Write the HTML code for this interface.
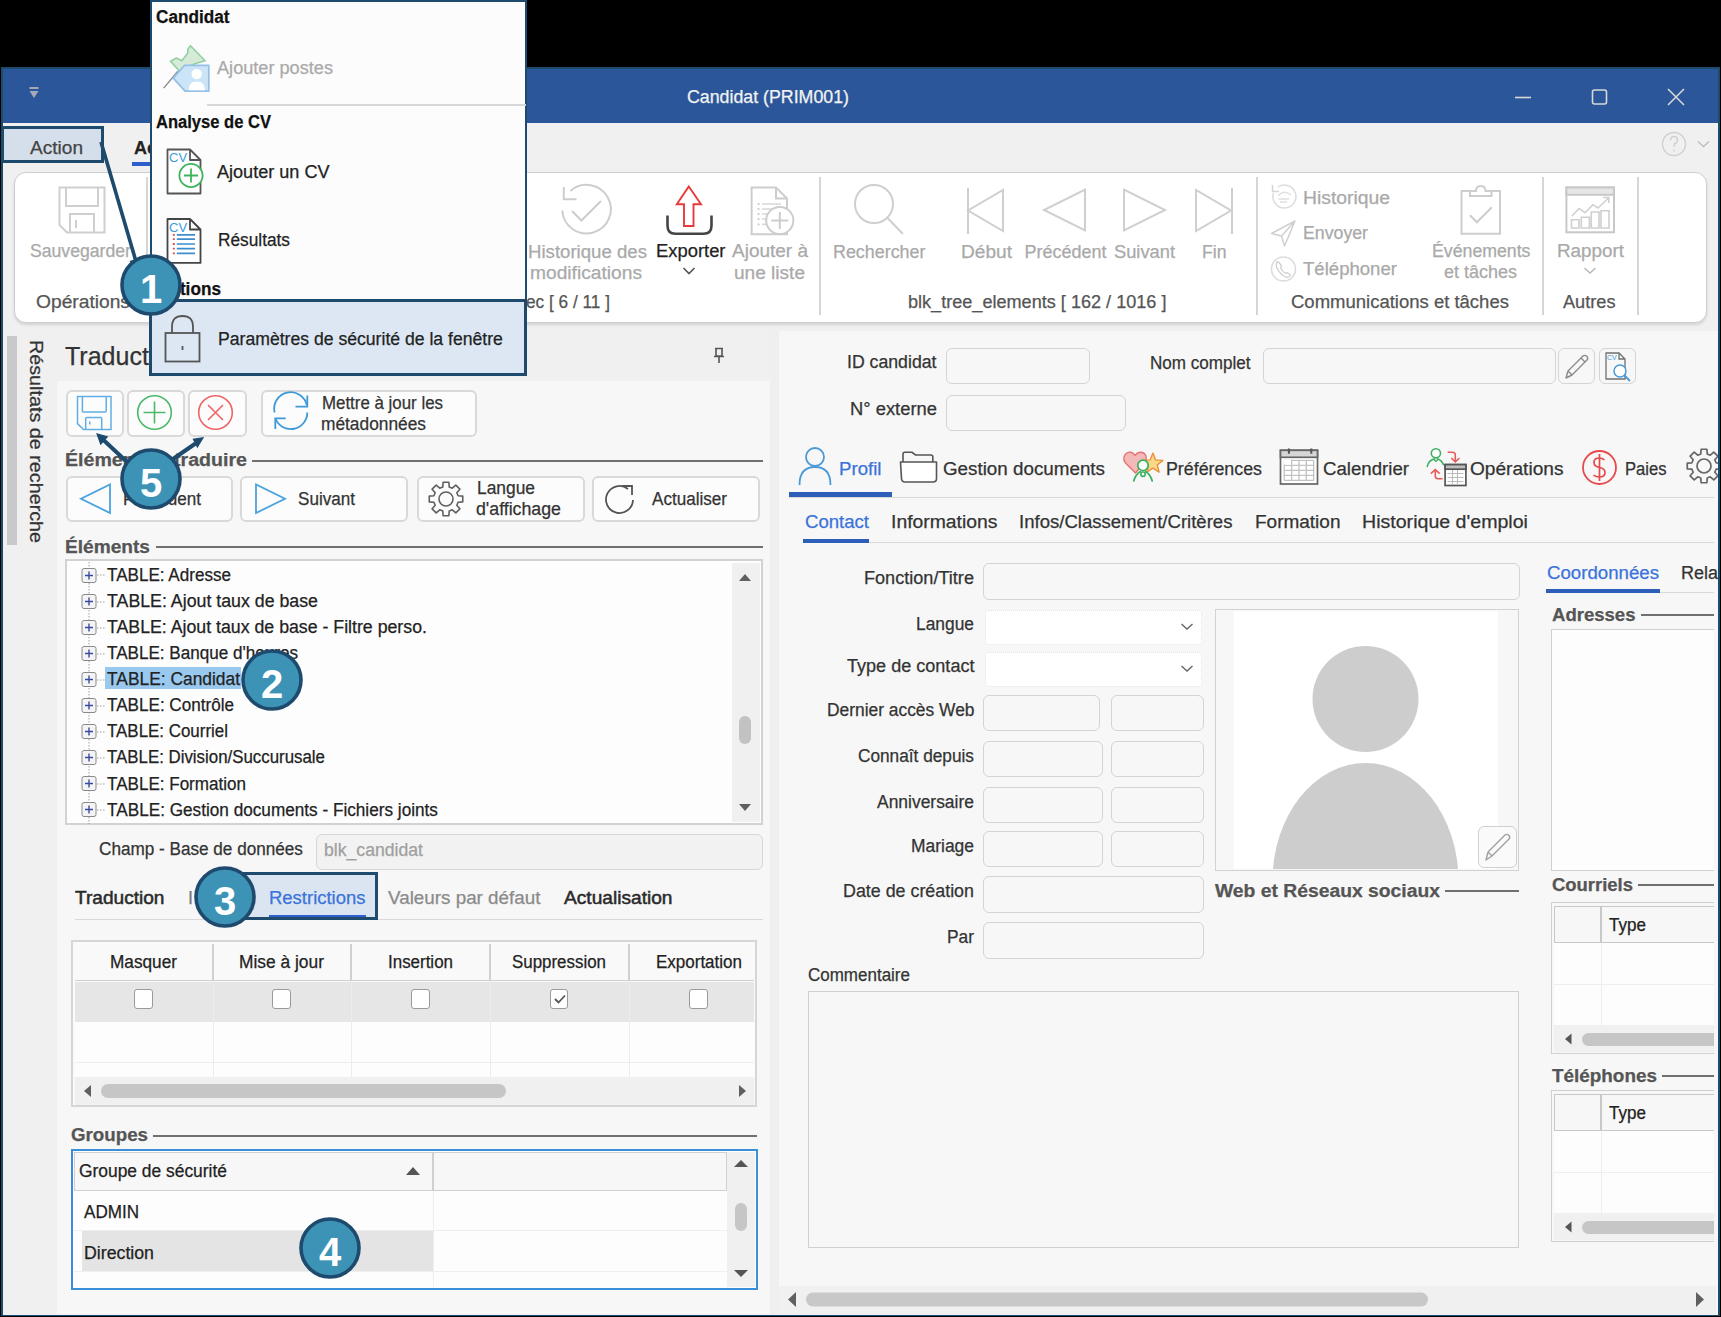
<!DOCTYPE html>
<html><head><meta charset="utf-8"><style>
html,body{margin:0;padding:0;}
body{width:1721px;height:1317px;background:#000;position:relative;overflow:hidden;font-family:"Liberation Sans",sans-serif;}
.t{position:absolute;white-space:nowrap;transform-origin:0 50%;-webkit-text-stroke:0.25px currentColor;}
.r{position:absolute;box-sizing:border-box;}
svg.r{overflow:visible;}
</style></head><body>
<div class="r" style="left:1px;top:67px;width:1720px;height:1250px;background:#f0f0f0;border:2px solid #1e4a6c;"></div>
<div class="r" style="left:3px;top:69px;width:1715px;height:54px;background:#2b579a;"></div>
<div class="t" style="left:687.0px;top:88.2px;font-size:18px;line-height:18px;color:#f2f2f2;transform:scaleX(0.9871);">Candidat (PRIM001)</div>
<svg class="r" style="left:29px;top:87px;" width="10" height="13" viewBox="0 0 10 13"><rect x="0.5" y="0" width="9" height="2" fill="#a8a8b8"/><path d="M0.5 4 L9.5 4 L5 11 Z" fill="#a8a8b8"/></svg>
<svg class="r" style="left:1510px;top:85px;" width="200" height="25" viewBox="0 0 200 25"><path d="M5 12.5 H21" stroke="#d8d8d8" stroke-width="1.6"/><rect x="82.5" y="5" width="14" height="14" rx="2" fill="none" stroke="#d8d8d8" stroke-width="1.6"/><path d="M158 4 L174 20 M174 4 L158 20" stroke="#d8d8d8" stroke-width="1.6"/></svg>
<svg class="r" style="left:1660px;top:130px;" width="54" height="30" viewBox="0 0 54 30"><circle cx="14" cy="14" r="11.5" fill="none" stroke="#cfcfcf" stroke-width="1.4"/><path d="M10.5 10.5 Q10.5 6.5 14 6.5 Q17.5 6.5 17.5 10 Q17.5 12.5 14.5 14 L14 17" fill="none" stroke="#cfcfcf" stroke-width="1.4"/><circle cx="14" cy="20.5" r="0.9" fill="#cfcfcf"/><path d="M38 11.5 L43.5 16.5 L49 11.5" fill="none" stroke="#bdbdbd" stroke-width="1.4"/></svg>
<div class="t" style="left:30.0px;top:139.2px;font-size:18px;line-height:18px;color:#444;transform:scaleX(1.0593);">Action</div>
<div class="t" style="left:134.0px;top:139.2px;font-size:18px;line-height:18px;color:#222;font-weight:bold;">Ac</div>
<div class="r" style="left:132px;top:162px;width:18px;height:4px;background:#2c5fcc;"></div>
<div class="r" style="left:14px;top:172px;width:1693px;height:151px;background:#fff;border:1.5px solid #cfcfcf;border-radius:12px;box-shadow:0 2px 3px rgba(0,0,0,0.12);"></div>
<div class="r" style="left:146px;top:177px;width:1.5px;height:138px;background:#d6d6d6;"></div>
<div class="r" style="left:819px;top:177px;width:1.5px;height:138px;background:#d6d6d6;"></div>
<div class="r" style="left:1256px;top:177px;width:1.5px;height:138px;background:#d6d6d6;"></div>
<div class="r" style="left:1542px;top:177px;width:1.5px;height:138px;background:#d6d6d6;"></div>
<div class="r" style="left:1637px;top:177px;width:1.5px;height:138px;background:#d6d6d6;"></div>
<svg class="r" style="left:58px;top:186px;" width="48" height="48" viewBox="0 0 48 48"><path d="M1.5 1.5 H46.5 V46.5 H9 L1.5 39 Z" fill="none" stroke="#cfcfcf" stroke-width="2"/><path d="M8 1.5 V20 H40 V1.5" fill="none" stroke="#cfcfcf" stroke-width="2"/><path d="M12 46.5 V28 H36 V46.5" fill="none" stroke="#cfcfcf" stroke-width="2"/><path d="M18 34 V42" stroke="#cfcfcf" stroke-width="2"/></svg>
<div class="t" style="left:30.0px;top:242.2px;font-size:18px;line-height:18px;color:#a9a9a9;transform:scaleX(0.9795);">Sauvegarder</div>
<div class="t" style="left:36.0px;top:293.2px;font-size:18px;line-height:18px;color:#555;transform:scaleX(1.0672);">Opérations</div>
<svg class="r" style="left:560px;top:185px;" width="52" height="52" viewBox="0 0 52 52"><path d="M2.3 25.5 A24.3 24.3 0 1 0 10.4 6" fill="none" stroke="#cdcdcd" stroke-width="2"/><path d="M3.8 2 V14.3 H16.5" fill="none" stroke="#cdcdcd" stroke-width="2"/><path d="M12 26 L21.4 35.5 L41 16" fill="none" stroke="#cdcdcd" stroke-width="2"/></svg>
<div class="t" style="left:528.0px;top:242.7px;font-size:18px;line-height:18px;color:#a9a9a9;transform:scaleX(1.0339);">Historique des</div>
<div class="t" style="left:530.0px;top:264.2px;font-size:18px;line-height:18px;color:#a9a9a9;transform:scaleX(1.0659);">modifications</div>
<div class="t" style="left:526.0px;top:293.2px;font-size:18px;line-height:18px;color:#555;transform:scaleX(0.9574);">ec [ 6 / 11 ]</div>
<svg class="r" style="left:664px;top:184px;" width="50" height="52" viewBox="0 0 50 52"><path d="M24.8 2.5 L37 20.3 H29.5 V42 H20 V20.3 H12.8 Z" fill="none" stroke="#e83a3a" stroke-width="1.9" stroke-linejoin="miter"/><path d="M3.5 31.5 V41.5 Q3.5 49.8 11.5 49.8 H39.5 Q47.5 49.8 47.5 41.5 V31.5" fill="none" stroke="#444" stroke-width="2.6"/></svg>
<div class="t" style="left:655.5px;top:242.2px;font-size:18px;line-height:18px;color:#222;transform:scaleX(1.0214);">Exporter</div>
<svg class="r" style="left:682px;top:266px;" width="14" height="10" viewBox="0 0 14 10"><path d="M1.5 2 L7 7.5 L12.5 2" fill="none" stroke="#555" stroke-width="1.6"/></svg>
<svg class="r" style="left:749px;top:185px;" width="50" height="52" viewBox="0 0 50 52"><path d="M2.6 2.5 H27 L38 13.5 V49.3 H2.6 Z" fill="none" stroke="#cdcdcd" stroke-width="2"/><path d="M27 2.5 V13.5 H38" fill="none" stroke="#cdcdcd" stroke-width="2"/><path d="M8.5 19 H10.5 M8.5 24 H10.5 M8.5 29 H10.5 M8.5 34 H10.5 M8.5 39.4 H10.5" stroke="#d0d0d0" stroke-width="2"/><path d="M13 19 H32 M13 24 H28 M13 29 H22 M13 34 H20 M13 39.4 H20" stroke="#d8d8d8" stroke-width="1.6"/><circle cx="30.8" cy="35.5" r="13.6" fill="#fff" stroke="#cdcdcd" stroke-width="2"/><path d="M30.8 27 V44 M22.3 35.5 H39.3" stroke="#cdcdcd" stroke-width="2"/></svg>
<div class="t" style="left:732.0px;top:242.2px;font-size:18px;line-height:18px;color:#a9a9a9;transform:scaleX(1.0546);">Ajouter à</div>
<div class="t" style="left:734.0px;top:264.2px;font-size:18px;line-height:18px;color:#a9a9a9;transform:scaleX(1.0587);">une liste</div>
<svg class="r" style="left:850px;top:182px;" width="56" height="56" viewBox="0 0 56 56"><circle cx="24" cy="22" r="19" fill="none" stroke="#cfcfcf" stroke-width="2"/><path d="M37.5 36 L53 52" stroke="#cfcfcf" stroke-width="2"/></svg>
<div class="t" style="left:833.0px;top:242.6px;font-size:18px;line-height:18px;color:#a9a9a9;transform:scaleX(0.9938);">Rechercher</div>
<svg class="r" style="left:965px;top:186px;" width="42" height="50" viewBox="0 0 42 50"><path d="M3 2 V48" stroke="#cfcfcf" stroke-width="2"/><path d="M38 4 V45 L3 24.5 Z" fill="none" stroke="#cfcfcf" stroke-width="2"/></svg>
<div class="t" style="left:960.5px;top:242.6px;font-size:18px;line-height:18px;color:#a9a9a9;transform:scaleX(1.0615);">Début</div>
<svg class="r" style="left:1041px;top:187px;" width="48" height="46" viewBox="0 0 48 46"><path d="M44 2.5 V43.5 L3 23 Z" fill="none" stroke="#cfcfcf" stroke-width="2"/></svg>
<div class="t" style="left:1024.5px;top:242.6px;font-size:18px;line-height:18px;color:#a9a9a9;">Précédent</div>
<svg class="r" style="left:1121px;top:187px;" width="48" height="46" viewBox="0 0 48 46"><path d="M3 2.5 V43.5 L44 23 Z" fill="none" stroke="#cfcfcf" stroke-width="2"/></svg>
<div class="t" style="left:1114.0px;top:242.6px;font-size:18px;line-height:18px;color:#a9a9a9;transform:scaleX(1.0159);">Suivant</div>
<svg class="r" style="left:1193px;top:186px;" width="42" height="50" viewBox="0 0 42 50"><path d="M39 2 V48" stroke="#cfcfcf" stroke-width="2"/><path d="M3 4 V45 L38 24.5 Z" fill="none" stroke="#cfcfcf" stroke-width="2"/></svg>
<div class="t" style="left:1202.0px;top:242.6px;font-size:18px;line-height:18px;color:#a9a9a9;transform:scaleX(0.9794);">Fin</div>
<div class="t" style="left:908.0px;top:293.2px;font-size:18px;line-height:18px;color:#555;transform:scaleX(1.0049);">blk_tree_elements [ 162 / 1016 ]</div>
<svg class="r" style="left:1270px;top:182px;" width="30" height="30" viewBox="0 0 30 30"><path d="M3.5 11 A11.5 11.5 0 1 0 8 5" fill="none" stroke="#dcdcdc" stroke-width="1.5"/><path d="M2.5 3 V9.5 H9" fill="none" stroke="#d4d4d4" stroke-width="1.5"/><path d="M8 14 Q14 7 21 13 M8.5 17 H19 M10 20 H17" fill="none" stroke="#e0e0e0" stroke-width="1.3"/></svg>
<div class="t" style="left:1303.0px;top:188.5px;font-size:18px;line-height:18px;color:#a9a9a9;transform:scaleX(1.0732);">Historique</div>
<svg class="r" style="left:1270px;top:219px;" width="30" height="30" viewBox="0 0 30 30"><path d="M1.5 14.5 L25 2 L14.5 27 L11.5 17 Z M11.5 17 L25 2" fill="none" stroke="#d0d0d0" stroke-width="1.5" stroke-linejoin="round"/></svg>
<div class="t" style="left:1303.0px;top:224.2px;font-size:18px;line-height:18px;color:#a9a9a9;transform:scaleX(0.9841);">Envoyer</div>
<svg class="r" style="left:1270px;top:255px;" width="30" height="30" viewBox="0 0 30 30"><circle cx="13.5" cy="14" r="12" fill="none" stroke="#dcdcdc" stroke-width="1.6"/><path d="M7 7 Q5.5 9 6.5 12 Q9 18 14.5 21.5 Q17 23 19.5 21.5 L20.5 20 L17 17.5 L15.5 18.5 Q12 16.5 10.5 12.5 L11.5 11 L9 7.5 Z" fill="none" stroke="#d0d0d0" stroke-width="1.3" stroke-linejoin="round"/></svg>
<div class="t" style="left:1303.0px;top:260.2px;font-size:18px;line-height:18px;color:#a9a9a9;transform:scaleX(1.0317);">Téléphoner</div>
<svg class="r" style="left:1458px;top:183px;" width="46" height="54" viewBox="0 0 46 54"><path d="M12 8 H3.5 V50.8 H42 V8 H31" fill="none" stroke="#cdcdcd" stroke-width="2"/><path d="M12 8 V13 H33.5 V8 H27.5 Q27.5 3 22.7 3 Q18 3 18 8 Z" fill="#fff" stroke="#cdcdcd" stroke-width="2"/><path d="M11.9 32.3 L18.9 39.3 L33.8 24.2" fill="none" stroke="#cdcdcd" stroke-width="2"/></svg>
<div class="t" style="left:1432.0px;top:242.4px;font-size:18px;line-height:18px;color:#a9a9a9;transform:scaleX(0.9842);">Événements</div>
<div class="t" style="left:1444.0px;top:262.9px;font-size:18px;line-height:18px;color:#a9a9a9;">et tâches</div>
<div class="t" style="left:1290.5px;top:292.5px;font-size:18px;line-height:18px;color:#555;transform:scaleX(1.0275);">Communications et tâches</div>
<svg class="r" style="left:1564px;top:186px;" width="52" height="50" viewBox="0 0 52 50"><rect x="2.4" y="1.5" width="47.6" height="44.8" fill="none" stroke="#c8c8c8" stroke-width="2"/><rect x="2.4" y="1.5" width="47.6" height="7.3" fill="#e6e6e6" stroke="#c8c8c8" stroke-width="2"/><path d="M7.5 42 V33.7 H15 V42 Z M17.3 42 V31.2 H25.4 V42 Z M27.3 42 V26 H35 V42 Z M37 42 V24.8 H45 V42 Z" fill="none" stroke="#cfcfcf" stroke-width="1.6"/><path d="M8 30 L15 22.5 L21 26.7 L29 18.7 L34 22 L44.5 12 M39 11.5 H44.8 V17" fill="none" stroke="#d0d0d0" stroke-width="1.6"/></svg>
<div class="t" style="left:1556.5px;top:242.4px;font-size:18px;line-height:18px;color:#a9a9a9;transform:scaleX(1.0459);">Rapport</div>
<svg class="r" style="left:1583px;top:266px;" width="14" height="10" viewBox="0 0 14 10"><path d="M1.5 2 L7 7 L12.5 2" fill="none" stroke="#b8b8b8" stroke-width="1.4"/></svg>
<div class="t" style="left:1563.0px;top:292.5px;font-size:18px;line-height:18px;color:#555;transform:scaleX(1.0090);">Autres</div>
<div class="r" style="left:7px;top:336px;width:10px;height:209px;background:#c9c9c9;"></div>
<div class="t" style="left:36px;top:340px;font-size:18px;line-height:18px;color:#333;transform-origin:0 0;transform:translate(9px,0) rotate(90deg) scaleX(1.097);">Résultats de recherche</div>
<div class="t" style="left:65.0px;top:343.8px;font-size:25px;line-height:25px;color:#333;">Traduction</div>
<svg class="r" style="left:712px;top:347px;" width="14" height="17" viewBox="0 0 14 17"><path d="M3 1.5 H11 M4 1.5 V9 H10 V1.5 M2 9.5 H12 M7 9.5 V16" fill="none" stroke="#555" stroke-width="1.6"/></svg>
<div class="r" style="left:57px;top:381px;width:713px;height:933px;background:#f7f7f7;"></div>
<div class="r" style="left:770px;top:327px;width:9px;height:987px;background:#efefef;"></div>
<div class="r" style="left:66px;top:390px;width:58px;height:47px;background:#fcfcfc;border:2px solid #d9d9d9;border-radius:6px;"></div>
<div class="r" style="left:127px;top:390px;width:58px;height:47px;background:#fcfcfc;border:2px solid #d9d9d9;border-radius:6px;"></div>
<div class="r" style="left:188px;top:390px;width:59px;height:47px;background:#fcfcfc;border:2px solid #d9d9d9;border-radius:6px;"></div>
<div class="r" style="left:261px;top:390px;width:216px;height:47px;background:#fcfcfc;border:2px solid #d9d9d9;border-radius:6px;"></div>
<svg class="r" style="left:76px;top:394px;" width="38" height="38" viewBox="0 0 38 38"><path d="M1.5 2.5 H35 V35.6 H7.5 L1.5 29.6 Z" fill="none" stroke="#62aee2" stroke-width="1.5"/><path d="M6.4 2.5 V17 Q6.4 18 7.4 18 H29.2 Q30.2 18 30.2 17 V2.5" fill="none" stroke="#62aee2" stroke-width="1.5"/><path d="M9.7 35.6 V24.5 Q9.7 23.5 10.7 23.5 H24.7 Q25.7 23.5 25.7 24.5 V35.6" fill="none" stroke="#62aee2" stroke-width="1.5"/><rect x="13" y="27.5" width="1.5" height="3" fill="#62aee2"/></svg>
<svg class="r" style="left:136px;top:394px;" width="38" height="38" viewBox="0 0 38 38"><circle cx="18.5" cy="18.5" r="16.8" fill="none" stroke="#4cb96a" stroke-width="1.6"/><path d="M18.5 7.5 V29.5 M7.5 18.5 H29.5" stroke="#4cb96a" stroke-width="1.6"/></svg>
<svg class="r" style="left:197px;top:394px;" width="38" height="38" viewBox="0 0 38 38"><circle cx="18.5" cy="18.5" r="16.8" fill="none" stroke="#ef6464" stroke-width="1.6"/><path d="M11 11 L26 26 M26 11 L11 26" stroke="#ef6464" stroke-width="1.6"/></svg>
<svg class="r" style="left:272px;top:393px;" width="40" height="40" viewBox="0 0 40 40"><path d="M2.6 19.5 A16.5 16.5 0 0 1 34.8 12" fill="none" stroke="#3d9ad8" stroke-width="1.8"/><path d="M35.3 2.5 V13.6 H23.5" fill="none" stroke="#3d9ad8" stroke-width="1.8"/><path d="M35.3 19.5 A16.5 16.5 0 0 1 3.6 26" fill="none" stroke="#3d9ad8" stroke-width="1.8"/><path d="M3.3 36 V25.3 H13.7" fill="none" stroke="#3d9ad8" stroke-width="1.8"/></svg>
<div class="t" style="left:322.0px;top:394.2px;font-size:18px;line-height:18px;color:#333;transform:scaleX(0.9373);">Mettre à jour les</div>
<div class="t" style="left:321.0px;top:414.7px;font-size:18px;line-height:18px;color:#333;transform:scaleX(0.9622);">métadonnées</div>
<div class="t" style="left:65.0px;top:450.7px;font-size:18px;line-height:18px;color:#555;font-weight:bold;transform:scaleX(1.0892);">Éléments à traduire</div>
<div class="r" style="left:252px;top:459.5px;width:511px;height:2.0px;background:#707070;"></div>
<div class="r" style="left:66px;top:476px;width:167px;height:46px;background:#fcfcfc;border:2px solid #d9d9d9;border-radius:6px;"></div>
<div class="r" style="left:240px;top:476px;width:168px;height:46px;background:#fcfcfc;border:2px solid #d9d9d9;border-radius:6px;"></div>
<div class="r" style="left:417px;top:476px;width:168px;height:46px;background:#fcfcfc;border:2px solid #d9d9d9;border-radius:6px;"></div>
<div class="r" style="left:592px;top:476px;width:168px;height:46px;background:#fcfcfc;border:2px solid #d9d9d9;border-radius:6px;"></div>
<svg class="r" style="left:78px;top:482px;" width="36" height="34" viewBox="0 0 36 34"><path d="M32 2.5 V31 L3 16.75 Z" fill="none" stroke="#4ba3de" stroke-width="1.8"/></svg>
<div class="t" style="left:123.0px;top:490.2px;font-size:18px;line-height:18px;color:#333;transform:scaleX(0.9503);">Précédent</div>
<svg class="r" style="left:253px;top:482px;" width="36" height="34" viewBox="0 0 36 34"><path d="M3 2.5 V31 L32 16.75 Z" fill="none" stroke="#4ba3de" stroke-width="1.8"/></svg>
<div class="t" style="left:298.0px;top:490.2px;font-size:18px;line-height:18px;color:#333;transform:scaleX(0.9493);">Suivant</div>
<svg class="r" style="left:428px;top:481px;" width="36" height="36" viewBox="0 0 36 36"><path d="M30.08 14.79 L34.75 15.12 L34.75 20.88 L30.08 21.21 L28.81 24.27 L31.88 27.81 L27.81 31.88 L24.27 28.81 L21.21 30.08 L20.88 34.75 L15.12 34.75 L14.79 30.08 L11.73 28.81 L8.19 31.88 L4.12 27.81 L7.19 24.27 L5.92 21.21 L1.25 20.88 L1.25 15.12 L5.92 14.79 L7.19 11.73 L4.12 8.19 L8.19 4.12 L11.73 7.19 L14.79 5.92 L15.12 1.25 L20.88 1.25 L21.21 5.92 L24.27 7.19 L27.81 4.12 L31.88 8.19 L28.81 11.73 Z" fill="none" stroke="#606060" stroke-width="1.6" stroke-linejoin="round"/><circle cx="18" cy="18" r="7" fill="none" stroke="#606060" stroke-width="1.6"/></svg>
<div class="t" style="left:477.0px;top:479.2px;font-size:18px;line-height:18px;color:#333;transform:scaleX(0.9652);">Langue</div>
<div class="t" style="left:476.0px;top:499.7px;font-size:18px;line-height:18px;color:#333;transform:scaleX(0.9860);">d'affichage</div>
<svg class="r" style="left:602px;top:481px;" width="38" height="38" viewBox="0 0 38 38"><path d="M31 19 A13.5 13.5 0 1 1 26 8" fill="none" stroke="#555" stroke-width="1.8"/><path d="M20 5 H30 V14" fill="none" stroke="#555" stroke-width="1.8"/></svg>
<div class="t" style="left:652.0px;top:490.2px;font-size:18px;line-height:18px;color:#333;transform:scaleX(0.9488);">Actualiser</div>
<div class="t" style="left:65.0px;top:537.7px;font-size:18px;line-height:18px;color:#555;font-weight:bold;transform:scaleX(1.0619);">Éléments</div>
<div class="r" style="left:156px;top:546px;width:607px;height:2px;background:#707070;"></div>
<div class="r" style="left:65px;top:559px;width:698px;height:266px;background:#fdfdfd;border:2px solid #d2d2d2;"></div>
<svg class="r" style="left:88px;top:562px;" width="2" height="262" viewBox="0 0 2 262"><path d="M1 0 V262" stroke="#a0a0a0" stroke-width="1" stroke-dasharray="1.5 1.5"/></svg>
<svg class="r" style="left:81px;top:568px;" width="16" height="16" viewBox="0 0 16 16"><rect x="1" y="0.5" width="14" height="14" rx="2" fill="#f4f4f4" stroke="#8a8a8a" stroke-width="1"/><path d="M4 7.5 H12 M8 3.5 V11.5" stroke="#3a4aa0" stroke-width="1.4"/></svg>
<svg class="r" style="left:97px;top:574px;" width="8" height="2" viewBox="0 0 8 2"><path d="M0 1 H8" stroke="#a0a0a0" stroke-width="1" stroke-dasharray="1.5 1.5"/></svg>
<div class="t" style="left:107.0px;top:565.7px;font-size:18px;line-height:18px;color:#222;transform:scaleX(0.9485);">TABLE: Adresse</div>
<svg class="r" style="left:81px;top:594px;" width="16" height="16" viewBox="0 0 16 16"><rect x="1" y="0.5" width="14" height="14" rx="2" fill="#f4f4f4" stroke="#8a8a8a" stroke-width="1"/><path d="M4 7.5 H12 M8 3.5 V11.5" stroke="#3a4aa0" stroke-width="1.4"/></svg>
<svg class="r" style="left:97px;top:601px;" width="8" height="2" viewBox="0 0 8 2"><path d="M0 1 H8" stroke="#a0a0a0" stroke-width="1" stroke-dasharray="1.5 1.5"/></svg>
<div class="t" style="left:107.0px;top:591.8px;font-size:18px;line-height:18px;color:#222;transform:scaleX(0.9868);">TABLE: Ajout taux de base</div>
<svg class="r" style="left:81px;top:620px;" width="16" height="16" viewBox="0 0 16 16"><rect x="1" y="0.5" width="14" height="14" rx="2" fill="#f4f4f4" stroke="#8a8a8a" stroke-width="1"/><path d="M4 7.5 H12 M8 3.5 V11.5" stroke="#3a4aa0" stroke-width="1.4"/></svg>
<svg class="r" style="left:97px;top:627px;" width="8" height="2" viewBox="0 0 8 2"><path d="M0 1 H8" stroke="#a0a0a0" stroke-width="1" stroke-dasharray="1.5 1.5"/></svg>
<div class="t" style="left:107.0px;top:617.9px;font-size:18px;line-height:18px;color:#222;transform:scaleX(0.9849);">TABLE: Ajout taux de base - Filtre perso.</div>
<svg class="r" style="left:81px;top:646px;" width="16" height="16" viewBox="0 0 16 16"><rect x="1" y="0.5" width="14" height="14" rx="2" fill="#f4f4f4" stroke="#8a8a8a" stroke-width="1"/><path d="M4 7.5 H12 M8 3.5 V11.5" stroke="#3a4aa0" stroke-width="1.4"/></svg>
<svg class="r" style="left:97px;top:653px;" width="8" height="2" viewBox="0 0 8 2"><path d="M0 1 H8" stroke="#a0a0a0" stroke-width="1" stroke-dasharray="1.5 1.5"/></svg>
<div class="t" style="left:107.0px;top:644.0px;font-size:18px;line-height:18px;color:#222;transform:scaleX(0.9489);">TABLE: Banque d'heures</div>
<div class="r" style="left:105px;top:667px;width:136px;height:22px;background:#99c9ef;"></div>
<svg class="r" style="left:81px;top:672px;" width="16" height="16" viewBox="0 0 16 16"><rect x="1" y="0.5" width="14" height="14" rx="2" fill="#f4f4f4" stroke="#8a8a8a" stroke-width="1"/><path d="M4 7.5 H12 M8 3.5 V11.5" stroke="#3a4aa0" stroke-width="1.4"/></svg>
<svg class="r" style="left:97px;top:679px;" width="8" height="2" viewBox="0 0 8 2"><path d="M0 1 H8" stroke="#a0a0a0" stroke-width="1" stroke-dasharray="1.5 1.5"/></svg>
<div class="t" style="left:107.0px;top:670.1px;font-size:18px;line-height:18px;color:#222;transform:scaleX(0.9654);">TABLE: Candidat</div>
<svg class="r" style="left:81px;top:698px;" width="16" height="16" viewBox="0 0 16 16"><rect x="1" y="0.5" width="14" height="14" rx="2" fill="#f4f4f4" stroke="#8a8a8a" stroke-width="1"/><path d="M4 7.5 H12 M8 3.5 V11.5" stroke="#3a4aa0" stroke-width="1.4"/></svg>
<svg class="r" style="left:97px;top:705px;" width="8" height="2" viewBox="0 0 8 2"><path d="M0 1 H8" stroke="#a0a0a0" stroke-width="1" stroke-dasharray="1.5 1.5"/></svg>
<div class="t" style="left:107.0px;top:696.2px;font-size:18px;line-height:18px;color:#222;transform:scaleX(0.9495);">TABLE: Contrôle</div>
<svg class="r" style="left:81px;top:724px;" width="16" height="16" viewBox="0 0 16 16"><rect x="1" y="0.5" width="14" height="14" rx="2" fill="#f4f4f4" stroke="#8a8a8a" stroke-width="1"/><path d="M4 7.5 H12 M8 3.5 V11.5" stroke="#3a4aa0" stroke-width="1.4"/></svg>
<svg class="r" style="left:97px;top:731px;" width="8" height="2" viewBox="0 0 8 2"><path d="M0 1 H8" stroke="#a0a0a0" stroke-width="1" stroke-dasharray="1.5 1.5"/></svg>
<div class="t" style="left:107.0px;top:722.3px;font-size:18px;line-height:18px;color:#222;transform:scaleX(0.9399);">TABLE: Courriel</div>
<svg class="r" style="left:81px;top:750px;" width="16" height="16" viewBox="0 0 16 16"><rect x="1" y="0.5" width="14" height="14" rx="2" fill="#f4f4f4" stroke="#8a8a8a" stroke-width="1"/><path d="M4 7.5 H12 M8 3.5 V11.5" stroke="#3a4aa0" stroke-width="1.4"/></svg>
<svg class="r" style="left:97px;top:757px;" width="8" height="2" viewBox="0 0 8 2"><path d="M0 1 H8" stroke="#a0a0a0" stroke-width="1" stroke-dasharray="1.5 1.5"/></svg>
<div class="t" style="left:107.0px;top:748.4px;font-size:18px;line-height:18px;color:#222;transform:scaleX(0.9364);">TABLE: Division/Succurusale</div>
<svg class="r" style="left:81px;top:776px;" width="16" height="16" viewBox="0 0 16 16"><rect x="1" y="0.5" width="14" height="14" rx="2" fill="#f4f4f4" stroke="#8a8a8a" stroke-width="1"/><path d="M4 7.5 H12 M8 3.5 V11.5" stroke="#3a4aa0" stroke-width="1.4"/></svg>
<svg class="r" style="left:97px;top:783px;" width="8" height="2" viewBox="0 0 8 2"><path d="M0 1 H8" stroke="#a0a0a0" stroke-width="1" stroke-dasharray="1.5 1.5"/></svg>
<div class="t" style="left:107.0px;top:774.5px;font-size:18px;line-height:18px;color:#222;transform:scaleX(0.9472);">TABLE: Formation</div>
<svg class="r" style="left:81px;top:802px;" width="16" height="16" viewBox="0 0 16 16"><rect x="1" y="0.5" width="14" height="14" rx="2" fill="#f4f4f4" stroke="#8a8a8a" stroke-width="1"/><path d="M4 7.5 H12 M8 3.5 V11.5" stroke="#3a4aa0" stroke-width="1.4"/></svg>
<svg class="r" style="left:97px;top:809px;" width="8" height="2" viewBox="0 0 8 2"><path d="M0 1 H8" stroke="#a0a0a0" stroke-width="1" stroke-dasharray="1.5 1.5"/></svg>
<div class="t" style="left:107.0px;top:800.6px;font-size:18px;line-height:18px;color:#222;transform:scaleX(0.9542);">TABLE: Gestion documents - Fichiers joints</div>
<div class="r" style="left:732px;top:563px;width:28px;height:259px;background:#f0f0f0;"></div>
<svg class="r" style="left:737px;top:568px;" width="16" height="250" viewBox="0 0 16 250"><path d="M2 13 L8 6 L14 13 Z" fill="#606060"/><rect x="2" y="148" width="12" height="28" rx="6" fill="#c2c2c2"/><path d="M2 236 L8 243 L14 236 Z" fill="#606060"/></svg>
<div class="t" style="left:99.0px;top:839.7px;font-size:18px;line-height:18px;color:#333;transform:scaleX(0.9524);">Champ - Base de données</div>
<div class="r" style="left:316px;top:834px;width:447px;height:36px;background:#f2f2f2;border:1.5px solid #d6d6d6;border-radius:6px;"></div>
<div class="t" style="left:324.0px;top:841.2px;font-size:18px;line-height:18px;color:#a0a0a0;transform:scaleX(0.9791);">blk_candidat</div>
<div class="r" style="left:75px;top:918.5px;width:688px;height:1.5px;background:#d9d9d9;"></div>
<div class="r" style="left:241px;top:872px;width:137px;height:48px;background:#dae5f1;"></div>
<div class="t" style="left:75.0px;top:889.2px;font-size:18px;line-height:18px;color:#2a2a2a;transform:scaleX(1.0603);-webkit-text-stroke:0.5px #2a2a2a;">Traduction</div>
<div class="t" style="left:188.0px;top:889.2px;font-size:18px;line-height:18px;color:#777;">I</div>
<div class="t" style="left:269.0px;top:889.2px;font-size:18px;line-height:18px;color:#3a73d9;transform:scaleX(1.0261);">Restrictions</div>
<div class="r" style="left:268.5px;top:914.5px;width:97.0px;height:3.5px;background:#2e5fcf;"></div>
<div class="t" style="left:387.5px;top:889.2px;font-size:18px;line-height:18px;color:#8a8a8a;transform:scaleX(1.0459);">Valeurs par défaut</div>
<div class="t" style="left:563.5px;top:889.2px;font-size:18px;line-height:18px;color:#2a2a2a;transform:scaleX(1.0629);-webkit-text-stroke:0.5px #2a2a2a;">Actualisation</div>
<div class="r" style="left:71px;top:940px;width:686px;height:167px;background:#fafafa;border:2px solid #d6d6d6;"></div>
<div class="r" style="left:75px;top:944px;width:679px;height:37px;background:#f9f9f9;border-bottom:1.5px solid #d0d0d0;"></div>
<div class="r" style="left:75px;top:982px;width:679px;height:40px;background:#e6e6e6;"></div>
<div class="r" style="left:75px;top:1022px;width:679px;height:55px;background:#fdfdfd;"></div>
<div class="r" style="left:75px;top:1062px;width:679px;height:1px;background:#eeeeee;"></div>
<div class="t" style="left:110.2px;top:953.2px;font-size:18px;line-height:18px;color:#222;transform:scaleX(0.9563);">Masquer</div>
<div class="r" style="left:134px;top:989px;width:19px;height:20px;background:#fff;border:1.2px solid #9a9a9a;border-radius:3px;"></div>
<div class="r" style="left:211.5px;top:944px;width:2.0px;height:37px;background:#d0d0d0;"></div>
<div class="r" style="left:212.5px;top:981px;width:1.0px;height:96px;background:#ececec;"></div>
<div class="t" style="left:239.2px;top:953.2px;font-size:18px;line-height:18px;color:#222;transform:scaleX(0.9652);">Mise à jour</div>
<div class="r" style="left:272px;top:989px;width:19px;height:20px;background:#fff;border:1.2px solid #9a9a9a;border-radius:3px;"></div>
<div class="r" style="left:350px;top:944px;width:2px;height:37px;background:#d0d0d0;"></div>
<div class="r" style="left:351px;top:981px;width:1px;height:96px;background:#ececec;"></div>
<div class="t" style="left:387.8px;top:953.2px;font-size:18px;line-height:18px;color:#222;transform:scaleX(0.9412);">Insertion</div>
<div class="r" style="left:411px;top:989px;width:19px;height:20px;background:#fff;border:1.2px solid #9a9a9a;border-radius:3px;"></div>
<div class="r" style="left:488.5px;top:944px;width:2.0px;height:37px;background:#d0d0d0;"></div>
<div class="r" style="left:489.5px;top:981px;width:1.0px;height:96px;background:#ececec;"></div>
<div class="t" style="left:512.0px;top:953.2px;font-size:18px;line-height:18px;color:#222;transform:scaleX(0.9391);">Suppression</div>
<div class="r" style="left:550px;top:989px;width:18px;height:20px;background:#fff;border:1.2px solid #9a9a9a;border-radius:3px;"></div>
<div class="r" style="left:627.5px;top:944px;width:2.0px;height:37px;background:#d0d0d0;"></div>
<div class="r" style="left:628.5px;top:981px;width:1.0px;height:96px;background:#ececec;"></div>
<div class="t" style="left:655.5px;top:953.2px;font-size:18px;line-height:18px;color:#222;transform:scaleX(0.9442);">Exportation</div>
<div class="r" style="left:689px;top:989px;width:19px;height:20px;background:#fff;border:1.2px solid #9a9a9a;border-radius:3px;"></div>
<svg class="r" style="left:551px;top:991px;" width="18" height="16" viewBox="0 0 18 16"><path d="M4 8 L7.5 11.5 L14 4.5" fill="none" stroke="#555" stroke-width="1.8"/></svg>
<div class="r" style="left:75px;top:1077px;width:679px;height:28px;background:#f0f0f0;"></div>
<svg class="r" style="left:80px;top:1082px;" width="670" height="18" viewBox="0 0 670 18"><path d="M4 9 L11 3 V15 Z" fill="#606060"/><rect x="21" y="2" width="405" height="14" rx="7" fill="#c6c6c6"/><path d="M666 9 L659 3 V15 Z" fill="#606060"/></svg>
<div class="t" style="left:71.0px;top:1126.2px;font-size:18px;line-height:18px;color:#555;font-weight:bold;transform:scaleX(1.0401);">Groupes</div>
<div class="r" style="left:153px;top:1135px;width:604px;height:2px;background:#707070;"></div>
<div class="r" style="left:71px;top:1149px;width:687px;height:141px;background:#fdfdfd;border:2px solid #3a8fd8;"></div>
<div class="r" style="left:74px;top:1152px;width:653px;height:39px;background:#f7f7f7;border:1.5px solid #d0d0d0;"></div>
<div class="r" style="left:432px;top:1152px;width:2px;height:39px;background:#d0d0d0;"></div>
<div class="t" style="left:79.0px;top:1162.2px;font-size:18px;line-height:18px;color:#222;transform:scaleX(0.9664);">Groupe de sécurité</div>
<svg class="r" style="left:404px;top:1165px;" width="18" height="12" viewBox="0 0 18 12"><path d="M2 10 L9 2 L16 10 Z" fill="#555"/></svg>
<div class="r" style="left:74px;top:1191px;width:653px;height:96px;background:#fdfdfd;"></div>
<div class="r" style="left:82px;top:1231px;width:351px;height:41px;background:#e4e4e4;"></div>
<div class="r" style="left:74px;top:1230px;width:653px;height:1px;background:#efefef;"></div>
<div class="r" style="left:74px;top:1271px;width:653px;height:1px;background:#efefef;"></div>
<div class="r" style="left:433px;top:1191px;width:1px;height:96px;background:#efefef;"></div>
<div class="t" style="left:84.0px;top:1203.2px;font-size:18px;line-height:18px;color:#222;transform:scaleX(0.9483);">ADMIN</div>
<div class="t" style="left:84.0px;top:1244.2px;font-size:18px;line-height:18px;color:#222;transform:scaleX(0.9853);">Direction</div>
<div class="r" style="left:727px;top:1152px;width:28px;height:135px;background:#f0f0f0;"></div>
<svg class="r" style="left:731px;top:1156px;" width="20" height="128" viewBox="0 0 20 128"><path d="M3 11 L10 4 L17 11 Z" fill="#555"/><rect x="4" y="47" width="12" height="28" rx="6" fill="#c6c6c6"/><path d="M3 114 L10 121 L17 114 Z" fill="#555"/></svg>
<div class="r" style="left:779px;top:331px;width:939px;height:983px;background:#f7f7f7;"></div>
<div class="t" style="left:847.0px;top:353.2px;font-size:18px;line-height:18px;color:#333;transform:scaleX(0.9827);">ID candidat</div>
<div class="r" style="left:946px;top:348px;width:144px;height:36px;background:#f7f7f7;border:1.5px solid #d4d4d4;border-radius:6px;"></div>
<div class="t" style="left:849.5px;top:400.2px;font-size:18px;line-height:18px;color:#333;transform:scaleX(1.0203);">N° externe</div>
<div class="r" style="left:946px;top:395px;width:180px;height:36px;background:#f7f7f7;border:1.5px solid #d4d4d4;border-radius:6px;"></div>
<div class="t" style="left:1149.5px;top:353.7px;font-size:18px;line-height:18px;color:#333;transform:scaleX(0.9476);">Nom complet</div>
<div class="r" style="left:1263px;top:348px;width:293px;height:36px;background:#f7f7f7;border:1.5px solid #d4d4d4;border-radius:6px;"></div>
<div class="r" style="left:1558px;top:348px;width:37px;height:36px;background:#f7f7f7;border:1.5px solid #d4d4d4;border-radius:6px;"></div>
<div class="r" style="left:1599px;top:348px;width:37px;height:36px;background:#f7f7f7;border:1.5px solid #d4d4d4;border-radius:6px;"></div>
<svg class="r" style="left:1562px;top:352px;" width="30" height="30" viewBox="0 0 30 30"><path d="M4 26 L6 19 L21 4 Q23 2.5 25 4.5 Q26.5 6.5 25 8 L10 23 Z M6 19 L10 23 M19 6 L23 10" fill="none" stroke="#8a8a8a" stroke-width="1.4" stroke-linejoin="round"/></svg>
<svg class="r" style="left:1603px;top:351px;" width="30" height="32" viewBox="0 0 30 32"><path d="M3 2 H16 L22 8 V28 H3 Z M16 2 V8 H22" fill="none" stroke="#707070" stroke-width="1.3"/><text x="4" y="9" font-size="7" fill="#4a9ad8" font-family="Liberation Sans">CV</text><circle cx="17" cy="20" r="6" fill="#fff" stroke="#4a9ad8" stroke-width="1.5"/><path d="M21.5 24.5 L27 30" stroke="#4a9ad8" stroke-width="1.8"/></svg>
<div class="r" style="left:789px;top:496.5px;width:925px;height:1.5px;background:#d9d9d9;"></div>
<div class="r" style="left:789px;top:492px;width:103px;height:5px;background:#2e5fb8;"></div>
<svg class="r" style="left:797px;top:446px;" width="36" height="40" viewBox="0 0 36 40"><circle cx="18" cy="11" r="9" fill="none" stroke="#4a9ad8" stroke-width="1.8"/><path d="M2.5 39 Q2.5 21 18 21 Q33.5 21 33.5 39" fill="none" stroke="#4a9ad8" stroke-width="1.8"/></svg>
<div class="t" style="left:838.5px;top:459.7px;font-size:18px;line-height:18px;color:#3a73d9;transform:scaleX(1.0362);">Profil</div>
<svg class="r" style="left:899px;top:450px;" width="40" height="36" viewBox="0 0 40 36"><path d="M4 12 V4 Q4 2.3 5.7 2.3 H13 L16.5 5 H32 Q33.8 5 33.8 6.8 V12" fill="none" stroke="#555" stroke-width="1.6"/><path d="M1.5 12 H37.5 V28.5 Q37.5 32 34 32 H6 Q2.8 32 2.5 28.5 Z" fill="#fff" stroke="#555" stroke-width="1.6" stroke-linejoin="round"/></svg>
<div class="t" style="left:943.0px;top:459.7px;font-size:18px;line-height:18px;color:#333;transform:scaleX(1.0443);">Gestion documents</div>
<svg class="r" style="left:1121px;top:450px;" width="44" height="36" viewBox="0 0 44 36"><path d="M14.5 23 L5 13.5 Q1.5 9.5 3.5 5.5 Q6 1.5 10 2.2 Q12.5 2.8 14.1 5.5 Q16 2.5 19 2.2 Q23.5 2 25 6 Q26 9 24 12 Z" fill="#f3b9b9" stroke="#e57373" stroke-width="1.4" stroke-linejoin="round"/><path d="M31.9 3.1 L34.6 9.9 L41.9 10.4 L36.3 15.0 L38.1 22.1 L31.9 18.2 L25.7 22.1 L27.5 15.0 L21.9 10.4 L29.2 9.9 Z" fill="#f8d987" stroke="#ec8f3a" stroke-width="1.4" stroke-linejoin="round"/><circle cx="22" cy="15.3" r="5.2" fill="#fff" stroke="#3cb060" stroke-width="1.7"/><circle cx="22" cy="24.2" r="2.2" fill="#fff" stroke="#3cb060" stroke-width="1.6"/><path d="M12.7 31 Q14.5 24.5 19.5 21.5 M24.5 21.5 Q29.5 24.5 31.2 31" fill="none" stroke="#3cb060" stroke-width="1.7" stroke-linecap="round"/></svg>
<div class="t" style="left:1166.0px;top:459.7px;font-size:18px;line-height:18px;color:#333;transform:scaleX(0.9889);">Préférences</div>
<svg class="r" style="left:1279px;top:448px;" width="40" height="40" viewBox="0 0 40 40"><rect x="1.5" y="2.3" width="37" height="33.7" fill="#fff" stroke="#666" stroke-width="1.7"/><rect x="1.5" y="2.3" width="37" height="7" fill="#d6d6d6" stroke="#666" stroke-width="1.7"/><path d="M9.9 0.5 V5.8 M32.3 0.5 V5.8" stroke="#555" stroke-width="2"/><path d="M5.2 12.4 H34.7 M5.2 17.4 H34.7 M5.2 22.4 H34.7 M5.2 27.3 H34.7 M5.2 32.3 H34.7 M5.2 12.4 V32.3 M12.6 12.4 V32.3 M20 12.4 V32.3 M27.3 12.4 V32.3 M34.7 12.4 V32.3 " stroke="#c2c2c2" stroke-width="1.3"/><rect x="4.5" y="11.7" width="7.4" height="4.9" fill="#fff"/></svg>
<div class="t" style="left:1323.0px;top:459.7px;font-size:18px;line-height:18px;color:#333;transform:scaleX(1.0352);">Calendrier</div>
<svg class="r" style="left:1426px;top:446px;" width="42" height="42" viewBox="0 0 42 42"><circle cx="9.9" cy="7.3" r="4.6" fill="#fff" stroke="#3cb060" stroke-width="1.6"/><path d="M1.3 20.4 Q2.5 14.5 8 13 Q9.9 17.5 11.8 13 Q16 14.5 17.3 18.6" fill="none" stroke="#3cb060" stroke-width="1.6" stroke-linecap="round"/><path d="M21.7 6.2 H26.5 Q29.3 6.2 29.3 9 V15.5 M25.3 12 L29.3 16 L33.4 12" fill="none" stroke="#e85a5a" stroke-width="1.6"/><path d="M16.6 32.8 H12 Q9.3 32.8 9.3 30 V24 M4.8 27.6 L9.3 23.6 L13.7 27.6" fill="none" stroke="#e85a5a" stroke-width="1.6"/><rect x="19.1" y="18.6" width="20.8" height="20.9" fill="#fff" stroke="#555" stroke-width="1.7"/><rect x="19.1" y="18.6" width="20.8" height="4.6" fill="#bdbdbd" stroke="#555" stroke-width="1.7"/><path d="M21.5 27.5 H37.5 M21.5 31.5 H37.5 M21.5 35.5 H37.5 M26.5 24 V38 M31.5 24 V38 " stroke="#bbb" stroke-width="1.1"/></svg>
<div class="t" style="left:1470.0px;top:459.7px;font-size:18px;line-height:18px;color:#333;transform:scaleX(1.0616);">Opérations</div>
<svg class="r" style="left:1581px;top:449px;" width="38" height="38" viewBox="0 0 38 38"><circle cx="18.5" cy="18.5" r="16.5" fill="none" stroke="#e64a4a" stroke-width="1.8"/><path d="M23.5 11 Q21.5 9 18 9 Q13 9 13 13.5 Q13 17.5 18.5 18.5 Q24 19.5 24 23.5 Q24 28 18.5 28 Q14.5 28 12.5 26 M18.5 5 V32" fill="none" stroke="#e64a4a" stroke-width="1.7"/></svg>
<div class="t" style="left:1624.5px;top:459.7px;font-size:18px;line-height:18px;color:#333;transform:scaleX(0.9216);">Paies</div>
<svg class="r" style="left:1686px;top:448px;" width="36" height="36" viewBox="0 0 36 36"><path d="M30.08 14.79 L34.75 15.12 L34.75 20.88 L30.08 21.21 L28.81 24.27 L31.88 27.81 L27.81 31.88 L24.27 28.81 L21.21 30.08 L20.88 34.75 L15.12 34.75 L14.79 30.08 L11.73 28.81 L8.19 31.88 L4.12 27.81 L7.19 24.27 L5.92 21.21 L1.25 20.88 L1.25 15.12 L5.92 14.79 L7.19 11.73 L4.12 8.19 L8.19 4.12 L11.73 7.19 L14.79 5.92 L15.12 1.25 L20.88 1.25 L21.21 5.92 L24.27 7.19 L27.81 4.12 L31.88 8.19 L28.81 11.73 Z" fill="none" stroke="#666" stroke-width="1.7" stroke-linejoin="round"/><circle cx="18" cy="18" r="7" fill="none" stroke="#666" stroke-width="1.7"/></svg>
<div class="r" style="left:803px;top:541.5px;width:911px;height:1.5px;background:#d9d9d9;"></div>
<div class="r" style="left:803px;top:538.5px;width:66px;height:4.5px;background:#2e5fb8;"></div>
<div class="t" style="left:804.5px;top:513.2px;font-size:18px;line-height:18px;color:#3a73d9;transform:scaleX(1.0315);">Contact</div>
<div class="t" style="left:890.5px;top:513.2px;font-size:18px;line-height:18px;color:#333;transform:scaleX(1.0749);">Informations</div>
<div class="t" style="left:1019.0px;top:513.2px;font-size:18px;line-height:18px;color:#333;transform:scaleX(1.0308);">Infos/Classement/Critères</div>
<div class="t" style="left:1254.5px;top:513.2px;font-size:18px;line-height:18px;color:#333;transform:scaleX(1.0547);">Formation</div>
<div class="t" style="left:1362.0px;top:513.2px;font-size:18px;line-height:18px;color:#333;transform:scaleX(1.0881);">Historique d'emploi</div>
<div class="t" style="left:864.2px;top:568.9px;font-size:18px;line-height:18px;color:#333;transform:scaleX(1.0054);">Fonction/Titre</div>
<div class="t" style="left:916.2px;top:614.6px;font-size:18px;line-height:18px;color:#333;transform:scaleX(0.9652);">Langue</div>
<div class="t" style="left:846.7px;top:657.1px;font-size:18px;line-height:18px;color:#333;transform:scaleX(1.0031);">Type de contact</div>
<div class="t" style="left:826.7px;top:701.2px;font-size:18px;line-height:18px;color:#333;transform:scaleX(0.9655);">Dernier accès Web</div>
<div class="t" style="left:858.2px;top:746.8px;font-size:18px;line-height:18px;color:#333;transform:scaleX(0.9577);">Connaît depuis</div>
<div class="t" style="left:877.2px;top:792.5px;font-size:18px;line-height:18px;color:#333;transform:scaleX(0.9692);">Anniversaire</div>
<div class="t" style="left:911.2px;top:836.6px;font-size:18px;line-height:18px;color:#333;transform:scaleX(0.9683);">Mariage</div>
<div class="t" style="left:843.2px;top:882.2px;font-size:18px;line-height:18px;color:#333;transform:scaleX(0.9915);">Date de création</div>
<div class="t" style="left:947.2px;top:927.9px;font-size:18px;line-height:18px;color:#333;transform:scaleX(0.9637);">Par</div>
<div class="r" style="left:983px;top:563px;width:537px;height:37px;background:#f7f7f7;border:1.5px solid #d4d4d4;border-radius:6px;"></div>
<div class="r" style="left:985px;top:610px;width:217px;height:35px;background:#fff;border:1px dotted #e3e3e3;border-radius:4px;"></div>
<svg class="r" style="left:1180px;top:622px;" width="14" height="10" viewBox="0 0 14 10"><path d="M1.5 2 L7 7 L12.5 2" fill="none" stroke="#666" stroke-width="1.4"/></svg>
<div class="r" style="left:985px;top:652px;width:217px;height:35px;background:#fff;border:1px dotted #e3e3e3;border-radius:4px;"></div>
<svg class="r" style="left:1180px;top:664px;" width="14" height="10" viewBox="0 0 14 10"><path d="M1.5 2 L7 7 L12.5 2" fill="none" stroke="#666" stroke-width="1.4"/></svg>
<div class="r" style="left:983px;top:695px;width:117px;height:36px;background:#f7f7f7;border:1.5px solid #d4d4d4;border-radius:6px;"></div>
<div class="r" style="left:1111px;top:695px;width:93px;height:36px;background:#f7f7f7;border:1.5px solid #d4d4d4;border-radius:6px;"></div>
<div class="r" style="left:983px;top:741px;width:120px;height:36px;background:#f7f7f7;border:1.5px solid #d4d4d4;border-radius:6px;"></div>
<div class="r" style="left:1111px;top:741px;width:93px;height:36px;background:#f7f7f7;border:1.5px solid #d4d4d4;border-radius:6px;"></div>
<div class="r" style="left:983px;top:787px;width:120px;height:36px;background:#f7f7f7;border:1.5px solid #d4d4d4;border-radius:6px;"></div>
<div class="r" style="left:1111px;top:787px;width:93px;height:36px;background:#f7f7f7;border:1.5px solid #d4d4d4;border-radius:6px;"></div>
<div class="r" style="left:983px;top:831px;width:120px;height:36px;background:#f7f7f7;border:1.5px solid #d4d4d4;border-radius:6px;"></div>
<div class="r" style="left:1111px;top:831px;width:93px;height:36px;background:#f7f7f7;border:1.5px solid #d4d4d4;border-radius:6px;"></div>
<div class="r" style="left:983px;top:876px;width:221px;height:37px;background:#f7f7f7;border:1.5px solid #d4d4d4;border-radius:6px;"></div>
<div class="r" style="left:983px;top:922px;width:221px;height:37px;background:#f7f7f7;border:1.5px solid #d4d4d4;border-radius:6px;"></div>
<div class="r" style="left:1215px;top:609px;width:304px;height:262px;background:#f7f7f7;border:1.5px solid #d2d2d2;"></div>
<div class="r" style="left:1234px;top:611px;width:264px;height:258px;background:#fff;"></div>
<svg class="r" style="left:1234px;top:611px;overflow:hidden;" width="264" height="258" viewBox="0 0 264 258"><circle cx="131.5" cy="88" r="53" fill="#cdcdcd"/><ellipse cx="131.5" cy="270" rx="93" ry="118" fill="#cdcdcd"/></svg>
<div class="r" style="left:1478px;top:826px;width:39px;height:42px;background:#fafafa;border:1.2px solid #d0d0d0;border-radius:6px;"></div>
<svg class="r" style="left:1482px;top:830px;" width="32" height="34" viewBox="0 0 32 34"><path d="M4 30 L6 22 L23 5 Q25 3.5 27 5.5 Q28.5 7.5 27 9 L10 26 Z M6 22 L10 26" fill="none" stroke="#a0a0a0" stroke-width="1.4" stroke-linejoin="round"/></svg>
<div class="t" style="left:1215.0px;top:882.0px;font-size:18px;line-height:18px;color:#555;font-weight:bold;transform:scaleX(1.0723);">Web et Réseaux sociaux</div>
<div class="r" style="left:1445px;top:890px;width:74px;height:2px;background:#707070;"></div>
<div class="t" style="left:808.0px;top:965.7px;font-size:18px;line-height:18px;color:#333;transform:scaleX(0.9438);">Commentaire</div>
<div class="r" style="left:808px;top:991px;width:711px;height:257px;background:#f7f7f7;border:1.5px solid #d0d0d0;"></div>
<div class="r" style="left:1546px;top:591.5px;width:168px;height:1.5px;background:#d9d9d9;"></div>
<div class="r" style="left:1546px;top:588.5px;width:114px;height:4.5px;background:#2e5fb8;"></div>
<div class="t" style="left:1547.0px;top:564.0px;font-size:18px;line-height:18px;color:#3a73d9;transform:scaleX(1.0358);">Coordonnées</div>
<div class="t" style="left:1681.0px;top:564.0px;font-size:18px;line-height:18px;color:#333;">Rela</div>
<div class="t" style="left:1551.5px;top:605.6px;font-size:18px;line-height:18px;color:#555;font-weight:bold;transform:scaleX(1.0299);">Adresses</div>
<div class="r" style="left:1641px;top:614px;width:73px;height:2px;background:#707070;"></div>
<div class="r" style="left:1551px;top:629px;width:163px;height:242px;background:#fdfdfd;border:1.5px solid #d0d0d0;border-right:none;"></div>
<div class="t" style="left:1551.5px;top:875.5px;font-size:18px;line-height:18px;color:#555;font-weight:bold;transform:scaleX(1.0249);">Courriels</div>
<div class="r" style="left:1638px;top:884px;width:76px;height:2px;background:#707070;"></div>
<div class="r" style="left:1551px;top:902px;width:163px;height:152px;background:#f7f7f7;border:1.5px solid #d0d0d0;border-right:none;"></div>
<div class="r" style="left:1554px;top:906px;width:160px;height:37px;background:#f7f7f7;border:1.5px solid #c8c8c8;border-right:none;"></div>
<div class="r" style="left:1600px;top:906px;width:2px;height:37px;background:#c8c8c8;"></div>
<div class="r" style="left:1554px;top:943px;width:160px;height:82px;background:#fdfdfd;"></div>
<div class="r" style="left:1554px;top:984px;width:160px;height:1px;background:#eeeeee;"></div>
<div class="r" style="left:1601px;top:943px;width:1px;height:82px;background:#eeeeee;"></div>
<div class="t" style="left:1609.0px;top:916.2px;font-size:18px;line-height:18px;color:#222;transform:scaleX(0.9480);">Type</div>
<div class="r" style="left:1554px;top:1025px;width:160px;height:27px;background:#f0f0f0;"></div>
<svg class="r" style="left:1562px;top:1031px;overflow:hidden;" width="152" height="16" viewBox="0 0 152 16"><path d="M3 8 L9.5 2.5 V13.5 Z" fill="#555"/><rect x="20" y="2" width="150" height="13" rx="6.5" fill="#c6c6c6"/></svg>
<div class="r" style="left:1551px;top:1090px;width:163px;height:152px;background:#f7f7f7;border:1.5px solid #d0d0d0;border-right:none;"></div>
<div class="r" style="left:1554px;top:1094px;width:160px;height:37px;background:#f7f7f7;border:1.5px solid #c8c8c8;border-right:none;"></div>
<div class="r" style="left:1600px;top:1094px;width:2px;height:37px;background:#c8c8c8;"></div>
<div class="r" style="left:1554px;top:1131px;width:160px;height:82px;background:#fdfdfd;"></div>
<div class="r" style="left:1554px;top:1172px;width:160px;height:1px;background:#eeeeee;"></div>
<div class="r" style="left:1601px;top:1131px;width:1px;height:82px;background:#eeeeee;"></div>
<div class="t" style="left:1609.0px;top:1104.2px;font-size:18px;line-height:18px;color:#222;transform:scaleX(0.9480);">Type</div>
<div class="r" style="left:1554px;top:1213px;width:160px;height:27px;background:#f0f0f0;"></div>
<svg class="r" style="left:1562px;top:1219px;overflow:hidden;" width="152" height="16" viewBox="0 0 152 16"><path d="M3 8 L9.5 2.5 V13.5 Z" fill="#555"/><rect x="20" y="2" width="150" height="13" rx="6.5" fill="#c6c6c6"/></svg>
<div class="t" style="left:1551.5px;top:1066.5px;font-size:18px;line-height:18px;color:#555;font-weight:bold;transform:scaleX(1.0493);">Téléphones</div>
<div class="r" style="left:1662px;top:1075px;width:52px;height:2px;background:#707070;"></div>
<div class="r" style="left:779px;top:1286px;width:937px;height:28px;background:#f0f0f0;"></div>
<svg class="r" style="left:785px;top:1290px;" width="925" height="20" viewBox="0 0 925 20"><path d="M3 9.5 L11 2 V17 Z" fill="#606060"/><rect x="21" y="2.5" width="622" height="14" rx="7" fill="#c8c8c8"/><path d="M919 9.5 L911 2 V17 Z" fill="#606060"/></svg>
<div class="r" style="left:1px;top:67px;width:1720px;height:1250px;border:2px solid #1e4a6c;border-right-width:3px;"></div>
<div class="r" style="left:1720px;top:0px;width:1px;height:1317px;background:#000;"></div>
<div class="r" style="left:0px;top:1316px;width:1721px;height:1px;background:#000;"></div>
<div class="r" style="left:3px;top:127px;width:99px;height:33px;background:#d5dfeb;"></div>
<div class="t" style="left:30.0px;top:139.2px;font-size:18px;line-height:18px;color:#444;transform:scaleX(1.0593);">Action</div>
<div class="r" style="left:1px;top:126px;width:103px;height:37px;border:3.5px solid #1d4a6d;"></div>
<div class="r" style="left:150px;top:0px;width:377px;height:376px;background:#fcfcfc;border:2.5px solid #1d4a6d;"></div>
<div class="t" style="left:156.0px;top:8.2px;font-size:18px;line-height:18px;color:#111;font-weight:bold;transform:scaleX(0.9542);">Candidat</div>
<svg class="r" style="left:160px;top:42px;" width="52" height="54" viewBox="0 0 52 54"><path d="M10.5 19.2 L16.4 16 L21.9 18.8 L27.8 11 L27.8 7.4 L30.5 3.7 L45.1 18.8 L35.5 21.5 L19.1 28.8 Z" fill="#d5ead7" stroke="#92d0a4" stroke-width="1.6" stroke-linejoin="round"/><path d="M3.7 46.1 L17.8 29.3" stroke="#8a8a8a" stroke-width="1.4"/><path d="M13.2 36.1 L24.6 23.3 H48.8 V49.1 H25.1 Z" fill="#cce4f7" stroke="#94bfe6" stroke-width="1.7" stroke-linejoin="round"/><circle cx="36.7" cy="32" r="5.2" fill="#fff"/><path d="M28.5 48.3 Q28.5 39.5 36.7 39.5 Q44.9 39.5 44.9 48.3 Z" fill="#fff"/></svg>
<div class="t" style="left:217.0px;top:58.7px;font-size:18px;line-height:18px;color:#aaa;transform:scaleX(1.0079);">Ajouter postes</div>
<div class="r" style="left:207px;top:104px;width:319px;height:2px;background:#d8d8d8;"></div>
<div class="t" style="left:156.0px;top:113.2px;font-size:18px;line-height:18px;color:#111;font-weight:bold;transform:scaleX(0.9194);">Analyse de CV</div>
<svg class="r" style="left:165px;top:147px;" width="42" height="50" viewBox="0 0 42 50"><path d="M2.5 2.5 H25 L35.5 13 V46.5 H2.5 Z M25 2.5 V13 H35.5" fill="#fff" stroke="#555" stroke-width="1.8" stroke-linejoin="round"/><text x="4" y="15" font-size="13" fill="#3d9ad8" font-family="Liberation Sans">CV</text><circle cx="26" cy="28.5" r="11.6" fill="#fff" stroke="#3cb55a" stroke-width="1.8"/><path d="M26 21.5 V35.5 M19 28.5 H33" stroke="#3cb55a" stroke-width="1.8"/></svg>
<div class="t" style="left:217.0px;top:163.2px;font-size:18px;line-height:18px;color:#222;transform:scaleX(1.0038);">Ajouter un CV</div>
<svg class="r" style="left:165px;top:216px;" width="40" height="50" viewBox="0 0 40 50"><path d="M2.5 3 H25 L35.5 13.5 V46.9 H2.5 Z M25 3 V13.5 H35.5" fill="#fff" stroke="#444" stroke-width="1.8" stroke-linejoin="round"/><text x="4" y="15.5" font-size="13" fill="#3d9ad8" font-family="Liberation Sans">CV</text><path d="M11.8 18.8 H30 M11.8 23.2 H30 M11.8 28 H30 M11.8 32.6 H30 M11.8 37.3 H30" stroke="#3d8ed0" stroke-width="1.7"/><path d="M7.8 18.8 H9.8 M7.8 23.2 H9.8 M7.8 28 H9.8 M7.8 32.6 H9.8 M7.8 37.3 H9.8" stroke="#e64a4a" stroke-width="1.8"/></svg>
<div class="t" style="left:217.5px;top:231.2px;font-size:18px;line-height:18px;color:#222;transform:scaleX(0.9594);">Résultats</div>
<div class="t" style="left:156.0px;top:280.2px;font-size:18px;line-height:18px;color:#111;font-weight:bold;transform:scaleX(0.9557);">Options</div>
<div class="r" style="left:149px;top:299px;width:378px;height:77px;background:#dce7f3;border:3px solid #1d4a6d;"></div>
<svg class="r" style="left:164px;top:313px;" width="40" height="52" viewBox="0 0 40 52"><path d="M8 20 V14 Q8 3 18.5 3 Q29 3 29 14 V20" fill="none" stroke="#555" stroke-width="1.8"/><rect x="1.5" y="20" width="34" height="28.5" fill="none" stroke="#555" stroke-width="1.8"/><path d="M18.5 33 V37" stroke="#555" stroke-width="1.8"/></svg>
<div class="t" style="left:217.5px;top:330.2px;font-size:18px;line-height:18px;color:#222;transform:scaleX(0.9785);">Paramètres de sécurité de la fenêtre</div>
<div class="r" style="left:241px;top:872px;width:137px;height:48px;border:3px solid #1d4a6d;"></div>
<svg class="r" style="left:0px;top:0px;" width="400" height="560" viewBox="0 0 400 560"><path d="M101 142 L135.4 259.4" stroke="#1d4a6d" stroke-width="3.6"/><path d="M129.4 261.1 L138.6 271 L141.4 257.7 Z" fill="#1d4a6d"/><path d="M127 462 L103.5 440" stroke="#1d4a6d" stroke-width="4"/><path d="M96.1 433.1 L108.3 436.6 L100.5 445.3 Z" fill="#1d4a6d"/><path d="M173 459 L195.5 443.5" stroke="#1d4a6d" stroke-width="4"/><path d="M204.2 437 L192.5 438.7 L197.3 448.3 Z" fill="#1d4a6d"/></svg>
<svg class="r" style="left:118.5px;top:253px;" width="64" height="64" viewBox="0 0 64 64"><circle cx="32" cy="32" r="29" fill="#3d93b6" stroke="#1e4a6e" stroke-width="3.6"/><text x="32" y="50" text-anchor="middle" font-size="40" font-weight="bold" fill="#fff" font-family="Liberation Sans">1</text></svg>
<svg class="r" style="left:240px;top:648px;" width="64" height="64" viewBox="0 0 64 64"><circle cx="32" cy="32" r="29" fill="#3d93b6" stroke="#1e4a6e" stroke-width="3.6"/><text x="32" y="50" text-anchor="middle" font-size="40" font-weight="bold" fill="#fff" font-family="Liberation Sans">2</text></svg>
<svg class="r" style="left:192.5px;top:865px;" width="64" height="64" viewBox="0 0 64 64"><circle cx="32" cy="32" r="29" fill="#3d93b6" stroke="#1e4a6e" stroke-width="3.6"/><text x="32" y="50" text-anchor="middle" font-size="40" font-weight="bold" fill="#fff" font-family="Liberation Sans">3</text></svg>
<svg class="r" style="left:298px;top:1216px;" width="64" height="64" viewBox="0 0 64 64"><circle cx="32" cy="32" r="29" fill="#3d93b6" stroke="#1e4a6e" stroke-width="3.6"/><text x="32" y="50" text-anchor="middle" font-size="40" font-weight="bold" fill="#fff" font-family="Liberation Sans">4</text></svg>
<svg class="r" style="left:118.5px;top:447px;" width="64" height="64" viewBox="0 0 64 64"><circle cx="32" cy="32" r="29" fill="#3d93b6" stroke="#1e4a6e" stroke-width="3.6"/><text x="32" y="50" text-anchor="middle" font-size="40" font-weight="bold" fill="#fff" font-family="Liberation Sans">5</text></svg>
</body></html>
